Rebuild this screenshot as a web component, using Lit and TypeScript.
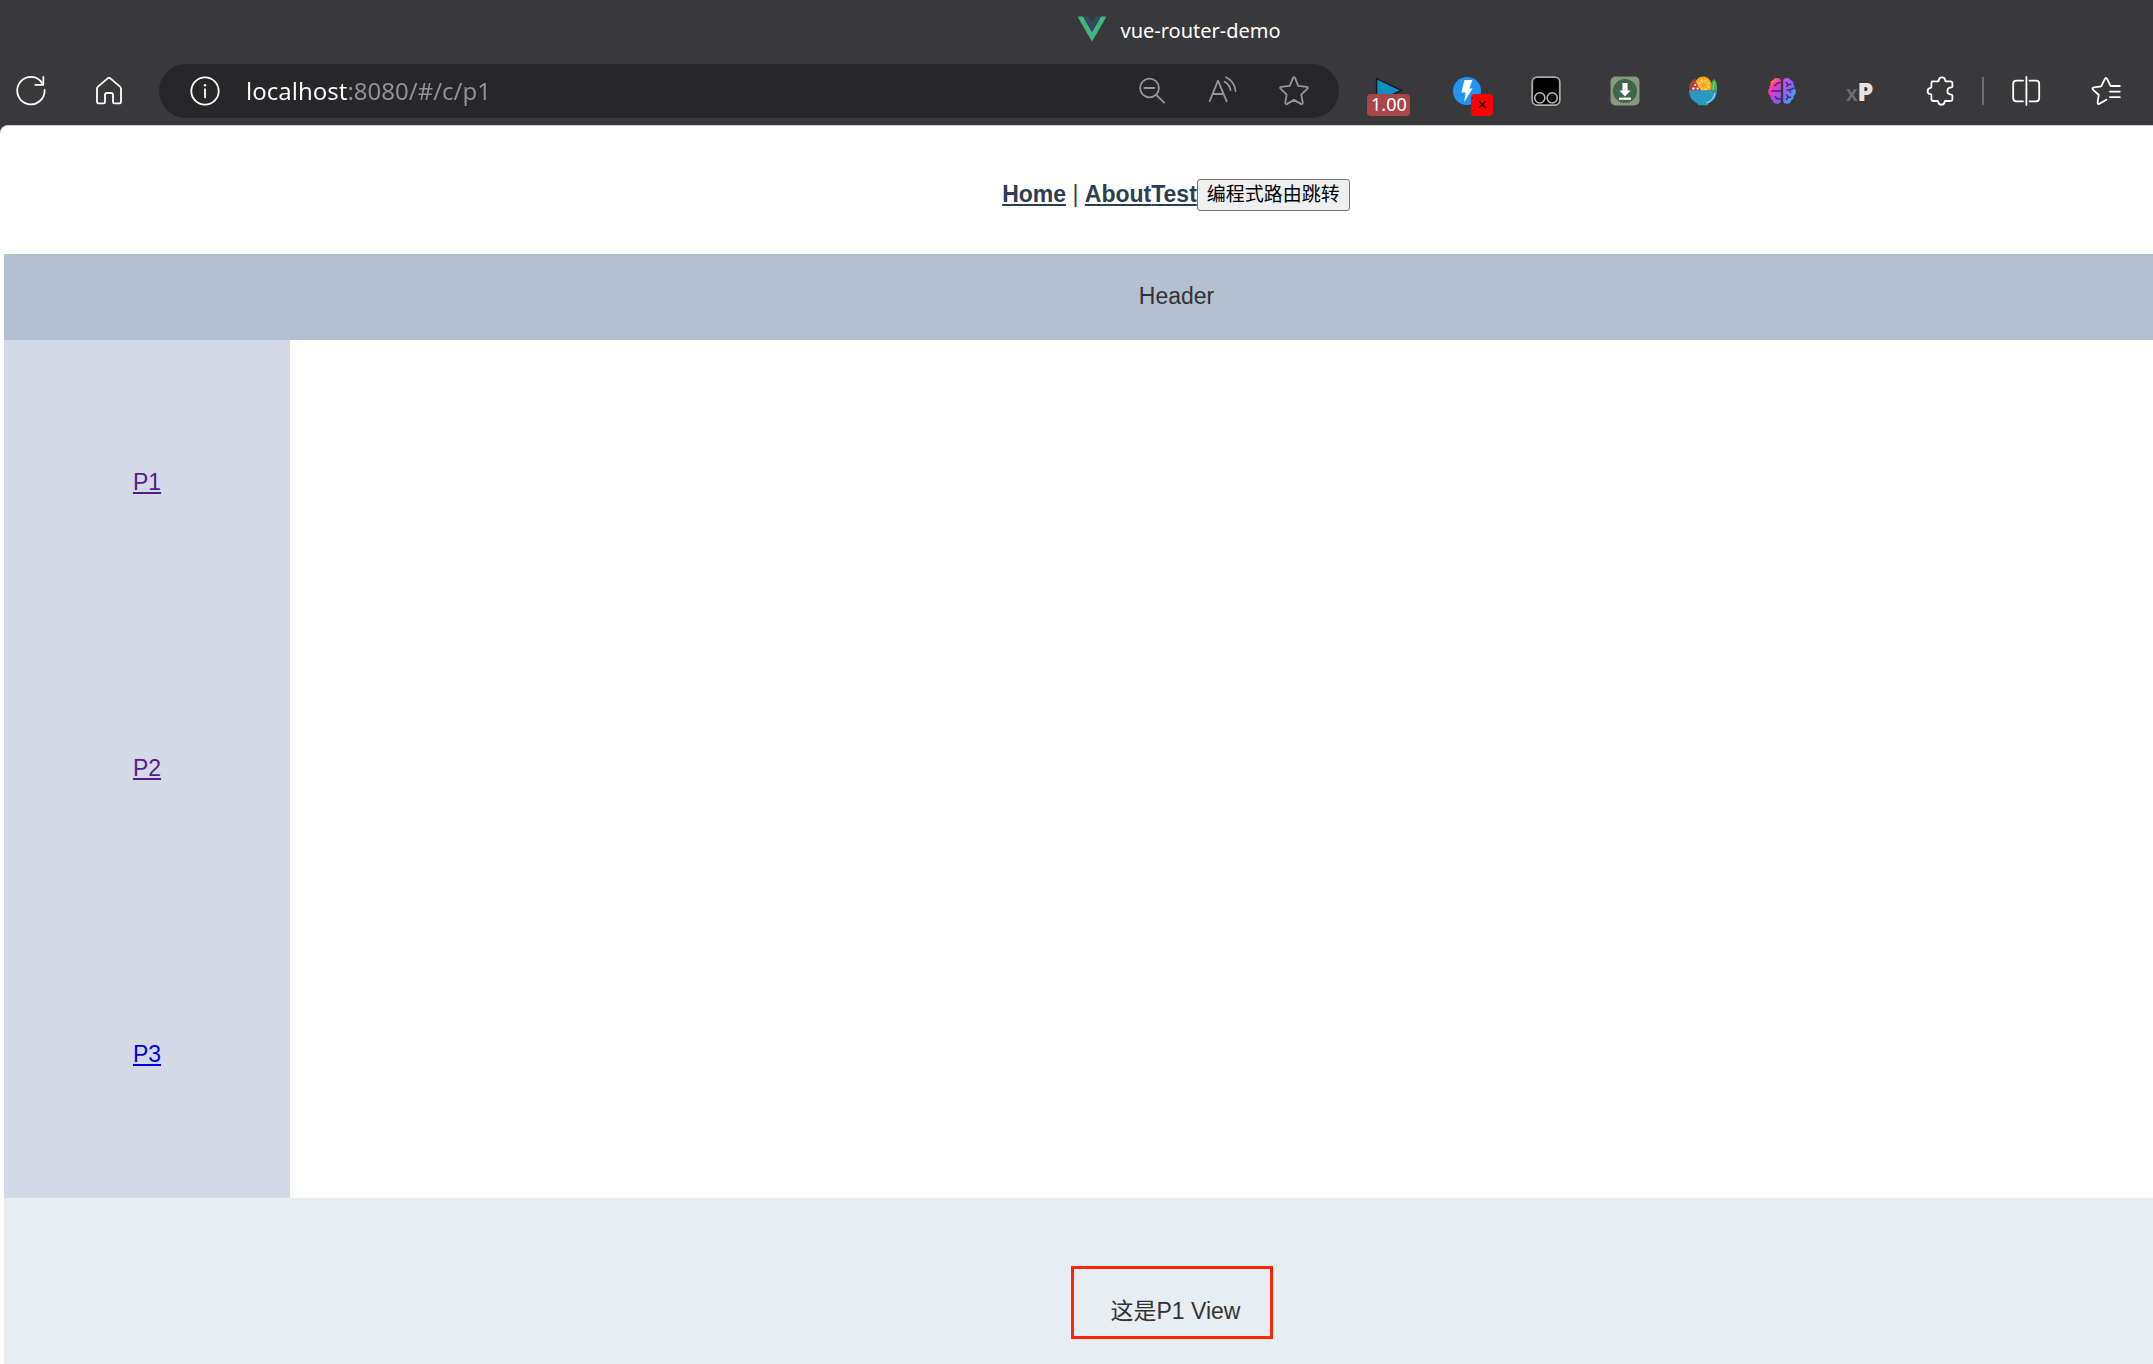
import { LitElement, html, css, svg, type SVGTemplateResult } from "lit";
import { customElement, property } from "lit/decorators.js";

/* Every icon is drawn around the origin of a 44 x 44 canvas. */
const icons: Record<string, SVGTemplateResult> = {
  vue: svg`
    <path d="M-14.5 -12.5H-9L0 3L9 -12.5H14.5L0 12.5Z" fill="#41b883"/>
    <path d="M-9 -12.5H-3.4L0 -6.6L3.4 -12.5H9L0 3Z" fill="#35495e"/>`,
  refresh: svg`
    <path class="line" d="M13.6 -1.2A13.7 13.7 0 1 1 9.2 -10.4L12.2 -6.4"/>
    <path class="line" d="M12.3 -14V-6.2H4.3"/>`,
  home: svg`<path class="line" d="M-12 -2.2Q-12 -3.6 -11 -4.4L-1 -12.9Q0 -13.7 1 -12.9L11 -4.4Q12 -3.6 12 -2.2V10.4Q12 12.4 10 12.4H5.6Q4 12.4 4 10.8V4Q4 2 2 2H-2Q-4 2 -4 4V10.8Q-4 12.4 -5.6 12.4H-10Q-12 12.4 -12 10.4Z"/>`,
  info: svg`
    <circle class="line" r="13.7"/>
    <path class="line" d="M0 -1.8V6.4"/>
    <circle cy="-5.8" r="1.3" fill="currentColor"/>`,
  zoomOut: svg`
    <circle class="line" cx="-2.5" cy="-3" r="9.4"/>
    <path class="line" d="M-7.6 -3H2.4M4.4 4L12.2 11.6"/>`,
  readAloud: svg`
    <path class="line" d="M-13.3 10.2L-5 -10.3L3.6 10.2M-10.4 3H.6"/>
    <path class="line" d="M1.6 -9.3Q6.8 -6.2 7.6 -.8M3 -13.7Q11.4 -9.8 12.6 0"/>`,
  star: svg`<path class="line" d="M-1.1 -12.9Q0 -14.8 1.1 -12.9L4.2 -5.2L12.6 -4.2Q14.8 -3.6 13.2 -2.1L7.3 3.6L8.7 11.4Q8.8 13.6 6.8 12.9L0 8.9L-6.8 12.9Q-8.8 13.6 -8.7 11.4L-7.3 3.6L-13.2 -2.1Q-14.8 -3.6 -12.6 -4.2L-4.2 -5.2Z"/>`,
  play: svg`<path d="M-11.4 -12.4L13.4 -.6L-11.4 11Z" fill="#0d8fc1" stroke="#141a20" stroke-width="1.4"/>`,
  bolt: svg`
    <circle r="14" fill="#2094f3"/>
    <path d="M-2.6 -11H5.4L2.4 -2.6H5.6L-2.8 11L-1.4 1.4H-5.6Z" fill="#fff"/>`,
  monkey: svg`
    <rect x="-13.8" y="-13.8" width="27.6" height="28" rx="5" fill="#000" stroke="#aaa" stroke-width="1.8"/>
    <circle cx="-6.2" cy="6.8" r="5.1" fill="#0b0b0b" stroke="#bbb" stroke-width="1.5"/>
    <circle cx="6.2" cy="6.8" r="5.1" fill="#0b0b0b" stroke="#bbb" stroke-width="1.5"/>`,
  download: svg`
    <rect x="-14.5" y="-14.5" width="29" height="29" rx="5" fill="#87997b"/>
    <circle r="12" fill="#3f654a"/>
    <path d="M-2.6 -8H2.6V-.6H5.6L0 5.4L-5.6 -.6H-2.6Z" fill="#fff"/>
    <rect x="-6" y="6.6" width="12" height="2.2" fill="#fff"/>`,
  bowl: svg`
    <path d="M-14 -.4Q-14.4 -8.6 -8.2 -12.6L-1 -2V-.4Z" fill="#bd343b"/>
    <path d="M-14 -.4Q-14.4 -8.6 -8.2 -12.6L-7.8 -11.4Q-12.8 -7.4 -12.6 -.4Z" fill="#8a4a3a"/>
    <path d="M6 -.4Q7.4 -8.6 11.4 -12.2Q15.2 -6 13.8 -.4Z" fill="#4caf50"/>
    <path d="M9.6 -.4L11.6 -9" stroke="#8ad486" stroke-width="1.1"/>
    <path d="M-3 -.4L-7.4 -9.6A8.2 8.2 0 0 1 8.2 -5Q8.2 -2.4 7 -.4Z" fill="#fca311"/>
    <circle cx=".8" cy="-6" r="6" fill="#ffd05a"/>
    <path d="M.8 -12V0M-5.2 -6H6.8M-3.4 -10.2L5 -1.8M5 -10.2L-3.4 -1.8" stroke="#f79a0e" stroke-width="1.1"/>
    <path d="M-12.4 -.4L-7.8 -9L-1.8 -.4Z" fill="#cb4046"/>
    <circle cx="-7.8" cy="-6" r="1.1" fill="#fff"/>
    <circle cx="-9.6" cy="-2.4" r="1.1" fill="#fff"/>
    <circle cx="-5.4" cy="-2.4" r="1.1" fill="#fff"/>
    <path d="M-14 -.8H14Q14.2 8.2 6 12.2L4.6 14.2H-4.6L-6 12.2Q-14.2 8.2 -14 -.8Z" fill="#2a98bf"/>
    <path d="M3.4 12Q10.6 9.4 12 2" fill="none" stroke="#a9d8e6" stroke-width="1.2"/>`,
  brain: svg`
    <defs>
      <linearGradient id="left" x1="0" y1="0" x2=".5" y2="1">
        <stop offset="0" stop-color="#ffa51f"/><stop offset=".2" stop-color="#ff7a45"/><stop offset=".45" stop-color="#fb2fc0"/><stop offset="1" stop-color="#8e55f7"/>
      </linearGradient>
      <linearGradient id="right" x1="0" y1="0" x2=".7" y2="1">
        <stop offset="0" stop-color="#d94bea"/><stop offset=".5" stop-color="#8a62f8"/><stop offset="1" stop-color="#27b4f7"/>
      </linearGradient>
    </defs>
    <path d="M-1.2 -11Q-2.4 -13.4 -5 -13Q-7.6 -13.2 -8.6 -11Q-12 -10 -11.4 -6.2Q-13 -4.4 -12.4 -2.4Q-14.6 -.4 -13.6 1.8Q-13.6 3.8 -11.6 4.8Q-12 8.4 -9 9.6Q-8.4 12.8 -5 12.8Q-2.2 13.2 -1.2 10.8Z" fill="url(#left)"/>
    <path d="M1.2 -11Q2.4 -13.4 5 -13Q7.6 -13.2 8.6 -11Q12 -10 11.4 -6.2Q13 -4.4 12.4 -2.4Q14.6 -.4 13.6 1.8Q13.6 3.8 11.6 4.8Q12 8.4 9 9.6Q8.4 12.8 5 12.8Q2.2 13.2 1.2 10.8Z" fill="url(#right)"/>
    <path d="M-1.2 -8.4H-3.4Q-5.8 -8 -6.4 -5.6H-8M-10.6 0H-1.2M-1.2 8H-4Q-6.4 7.6 -6.8 5.2M4 -9L6 -6.4L9.2 -6.6M6 -6.4L4.4 -4.2M4.6 -1H7.6L11.6 -3M7.6 -1L9 1.8M4 8.8L6 6L9.2 6.4M6 6L4.6 3.6" fill="none" stroke="#39305a" stroke-width="1.4"/>`,
  xp: svg`
    <text class="glyph faint" x="-15" y="10" font-size="21" fill="#707073">x</text>
    <text class="glyph" x="-3.4" y="10" font-size="25" fill="#e4e4e6">P</text>`,
  puzzle: svg`<path class="line" d="M-8 -9.7H-2Q-1.2 -9.7 -1.2 -10.6Q-1 -13.7 2 -13.7Q5 -13.7 5.2 -10.6Q5.2 -9.7 6 -9.7H10.4Q12.4 -9.7 12.4 -7.7V-4.4Q12.4 -3.6 11.4 -3.6Q7.4 -3.4 7.4 0Q7.4 3.4 11.4 3.6Q12.4 3.6 12.4 4.4V8Q12.4 10 10.4 10H5.4Q4.6 10 4.6 10.8Q4.2 13.7 1.4 13.7Q-1.4 13.7 -1.8 10.8Q-1.8 10 -2.6 10H-6.6Q-8.6 10 -8.6 8V4Q-8.6 3.2 -9.4 3.2Q-12.4 2.8 -12.4 .2Q-12.4 -2.8 -9.4 -3.2Q-8.6 -3.2 -8.6 -4V-7.7Q-8.6 -9.7 -6.6 -9.7Z"/>`,
  split: svg`<path class="line" d="M.4 -14V14M-3 -10.3H-9.6Q-12.8 -10.3 -12.8 -7V7Q-12.8 10.3 -9.6 10.3H-3M3.6 -10.3H10Q13.2 -10.3 13.2 -7V7Q13.2 10.3 10 10.3H3.6"/>`,
  favorites: svg`
    <path class="line" d="M13.8 -5H4.6L1.2 -11.8Q0 -14.2 -1.2 -11.8L-4.8 -4.6L-12 -3.6Q-14.6 -3 -12.8 -1.2L-7.2 4L-8.4 11.2Q-8.6 13.8 -6.4 12.6L.4 8.8"/>
    <path class="line" d="M4 .6H13.8M4 6.2H13.8"/>`,
};

@customElement("app-icon")
export class AppIcon extends LitElement {
  @property() name = "";

  static styles = css`
    :host { display: block; width: 44px; height: 44px; }
    .canvas { display: block; width: 100%; height: 100%; overflow: visible; }
    .line { fill: none; stroke: currentColor; stroke-width: 1.8; stroke-linecap: round; stroke-linejoin: round; }
    .glyph { font-family: "Open Sans", sans-serif; font-weight: 800; }
    .faint { font-weight: 600; }
  `;

  render() {
    return html`<svg class="canvas" viewBox="-22 -22 44 44" aria-hidden="true">${icons[this.name]}</svg>`;
  }
}

interface Extension { icon: string; label: string; badge?: string; tone?: string; }

const extensions: Extension[] = [
  { icon: "play", label: "Video speed", badge: "1.00", tone: "speed" },
  { icon: "bolt", label: "Accelerator", badge: "×", tone: "off" },
  { icon: "monkey", label: "User scripts" },
  { icon: "download", label: "Downloader" },
  { icon: "bowl", label: "Salad" },
  { icon: "brain", label: "Brain" },
  { icon: "xp", label: "XPath" },
  { icon: "puzzle", label: "Extensions" },
];

@customElement("browser-bar")
export class BrowserBar extends LitElement {
  static styles = css`
    :host { display: block; background: #39393c; color: #fff; font-family: "Noto Sans", "Open Sans", sans-serif; }
    .tab { display: flex; align-items: center; height: 64px; padding: 0 0 2px 50%; box-sizing: border-box; }
    .logo { width: 44px; margin: 0 7px 5px -7px; }
    .title { font-size: 20px; line-height: 28px; }
    .tools { display: flex; align-items: center; padding: 0 25px 7px 9px; }
    .tool { position: relative; display: block; flex: none; width: 44px; height: 44px; padding: 0; border: 0; background: none; color: inherit; font: inherit; }
    .home { margin: 0 28px 0 34px; }
    .address { display: flex; flex: 1; min-width: 0; align-items: center; height: 54px; padding: 0 23px 0 24px; box-sizing: border-box; border-radius: 27px; background: #272729; }
    .url { flex: 1; min-width: 0; height: 44px; margin-left: 19px; padding: 0; border: 0; outline: 0; font: 24px/44px "Noto Sans", "Open Sans", sans-serif; color: #fff; -webkit-text-fill-color: transparent; background: linear-gradient(90deg, #fff 101px, #929294 101px); -webkit-background-clip: text; background-clip: text; }
    .actions { display: flex; gap: 27px; color: #969698; }
    .extensions { display: grid; grid-template-columns: repeat(8, 1fr); justify-items: center; width: 630px; margin-left: 10px; }
    .badge { position: absolute; top: 25px; height: 22px; border-radius: 4px; line-height: 21px; text-align: center; }
    .speed { left: 1px; width: 43px; background: #a84648; font-size: 18px; }
    .off { left: 26px; width: 22px; background: #f00; color: #200; font-size: 18px; }
    .rule { width: 2px; height: 28px; margin: 0 20px 0 3px; background: #6e6e71; }
    .side { margin-right: 36px; }
  `;

  render() {
    return html`
      <div class="tab"><app-icon class="logo" name="vue"></app-icon><span class="title">vue-router-demo</span></div>
      <div class="tools">
        <button class="tool" aria-label="Refresh"><app-icon name="refresh"></app-icon></button>
        <button class="tool home" aria-label="Home"><app-icon name="home"></app-icon></button>
        <div class="address">
          <button class="tool" aria-label="Site information"><app-icon name="info"></app-icon></button>
          <input class="url" type="text" aria-label="Address" spellcheck="false" value="localhost:8080/#/c/p1">
          <div class="actions">
            <button class="tool" aria-label="Zoom out"><app-icon name="zoomOut"></app-icon></button>
            <button class="tool" aria-label="Read aloud"><app-icon name="readAloud"></app-icon></button>
            <button class="tool" aria-label="Add to favorites"><app-icon name="star"></app-icon></button>
          </div>
        </div>
        <div class="extensions">
          ${extensions.map((e) => html`
            <button class="tool" aria-label=${e.label}>
              <app-icon name=${e.icon}></app-icon>${e.badge ? html`<span class="badge ${e.tone}">${e.badge}</span>` : ""}
            </button>`)}
        </div>
        <span class="rule"></span>
        <button class="tool side" aria-label="Split screen"><app-icon name="split"></app-icon></button>
        <button class="tool" aria-label="Favorites"><app-icon name="favorites"></app-icon></button>
      </div>
    `;
  }
}

@customElement("app-root")
export class AppRoot extends LitElement {
  static styles = css`
    :host { display: flex; flex-direction: column; min-height: 100vh; background: #39393c; font: 23px/28px "Liberation Sans", "Noto Sans CJK SC", sans-serif; color: #333; }
    .page { display: flex; flex: 1; flex-direction: column; padding-left: 4px; border-top: 1px solid #d0d0d1; border-top-left-radius: 8px; background: #fff; }
    .nav { display: flex; align-items: center; justify-content: center; height: 128px; padding: 7px 0 0 195px; box-sizing: border-box; color: #2c3e50; white-space: pre; }
    .nav-link { font-weight: bold; color: #2c3e50; }
    .jump { height: 32px; margin-top: 2px; padding: 1px 9px 0 9px; border: 1px solid #767676; border-radius: 3px; background: #efefef; color: #000; font: 19px/28px "Liberation Sans", "Noto Sans CJK SC", sans-serif; }
    .header { padding: 28px 0 30px 196px; background: #b3c0d1; text-align: center; }
    .aside { display: flex; flex-direction: column; width: 286px; background: #d3dae6; }
    .side-link { padding: 128px 0 130px; text-align: center; color: #551a8b; }
    .side-link a { color: inherit; }
    .fresh { color: #00e; }
    .main { flex: 1; padding: 99px 0 30px 194px; background: #e8edf2; text-align: center; }
    .view { position: relative; display: inline-block; vertical-align: top; }
    .mark { position: absolute; top: -31px; right: -33px; bottom: -14px; left: -40px; border: 3px solid #ff2600; }
  `;

  render() {
    return html`
      <browser-bar></browser-bar>
      <div class="page">
        <nav class="nav"><a class="nav-link" href="#/">Home</a><span> | </span><a class="nav-link" href="#/about">About</a><a class="nav-link" href="#/test">Test</a><button class="jump">编程式路由跳转</button></nav>
        <header class="header">Header</header>
        <aside class="aside">
          <div class="side-link"><a href="#/c/p1">P1</a></div>
          <div class="side-link"><a href="#/c/p2">P2</a></div>
          <div class="side-link fresh"><a href="#/c/p3">P3</a></div>
        </aside>
        <main class="main"><span class="view">这是P1 View<span class="mark"></span></span></main>
      </div>
    `;
  }
}
